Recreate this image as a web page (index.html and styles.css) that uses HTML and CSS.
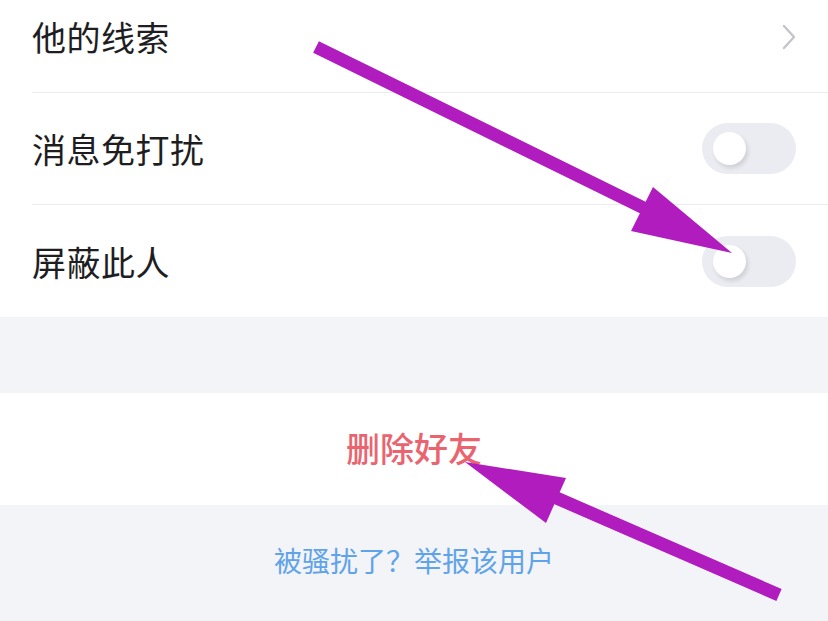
FILE: index.html
```html
<!DOCTYPE html>
<html lang="zh-CN">
<head>
    <meta charset="UTF-8">
    <meta name="viewport" content="width=device-width, initial-scale=1.0">
    <title>好友设置</title>
    <link rel="stylesheet" href="styles.css">
</head>
<body>

    <div class="page">
        <div class="group group-top">
            <div class="row">
                <span class="row-label">他的线索</span>
                <svg class="chevron" width="16" height="26" viewBox="0 0 16 26">
                    <polyline points="3,2 13,13 3,24" fill="none" stroke="#c4c5ca" stroke-width="2.4" stroke-linecap="round" stroke-linejoin="round"/>
                </svg>
            </div>
            <div class="row">
                <span class="row-label">消息免打扰</span>
                <span class="switch"><span class="knob"></span></span>
            </div>
            <div class="row">
                <span class="row-label">屏蔽此人</span>
                <span class="switch"><span class="knob"></span></span>
            </div>
        </div>

        <div class="group group-action">
            <button type="button" class="delete-btn">删除好友</button>
        </div>

        <div class="footer">
            <a href="#" class="report-link">被骚扰了？举报该用户</a>
        </div>

        <!-- annotation arrows drawn over the screenshot -->
        <svg class="arrows" width="828" height="621" viewBox="0 0 828 621">
            <line x1="316" y1="47" x2="660" y2="216" stroke="#b01cbd" stroke-width="13"/>
            <polygon points="732,253 653,187 631,231" fill="#b01cbd"/>
            <line x1="779" y1="595" x2="545" y2="493" stroke="#b01cbd" stroke-width="13"/>
            <polygon points="465,462 566,478 546,523" fill="#b01cbd"/>
        </svg>
    </div>

</body>
</html>
```

FILE: styles.css
```css
:root {
    --bg-gray: #f3f4f7;
    --text-dark: #1e1e22;
    --line: #ececee;
    --switch-off: #ebecf2;
    --danger: #ea6470;
    --link: #5fa3ea;
}
* { margin: 0; padding: 0; box-sizing: border-box; }
body {
    font-family: "Noto Sans CJK SC", "Noto Sans", sans-serif;
    background: var(--bg-gray);
    overflow: hidden;
}
.page {
    position: relative;
    display: flow-root;
    width: 828px;
    height: 621px;
}
.group { background: #fff; }
.group-top { margin-top: -19px; }
.row {
    display: flex;
    align-items: center;
    justify-content: space-between;
    height: 112px;
    margin-left: 32px;
    padding-right: 32px;
    border-bottom: 1px solid var(--line);
}
.row:last-child { border-bottom: none; }
.row-label { font-size: 34px; color: var(--text-dark); letter-spacing: 0.5px; }
.chevron { margin-right: -1px; }

.switch {
    display: flex;
    align-items: center;
    width: 94px;
    height: 51px;
    border-radius: 26px;
    background: var(--switch-off);
    padding-left: 11px;
}
.knob {
    width: 33px;
    height: 33px;
    border-radius: 50%;
    background: #fff;
    box-shadow: 2px 3px 4px rgba(0, 0, 0, 0.12);
}

.group-action {
    margin-top: 76px;
    height: 112px;
    display: flex;
    align-items: center;
    justify-content: center;
}
.delete-btn {
    font-family: inherit;
    font-size: 34px;
    font-weight: 500;
    color: var(--danger);
    background: none;
    border: none;
    cursor: pointer;
    margin-top: -4px;
}

.footer {
    text-align: center;
    padding-top: 35px;
}
.report-link {
    font-size: 28px;
    color: var(--link);
    text-decoration: none;
}

.arrows {
    position: absolute;
    left: 0;
    top: 0;
    pointer-events: none;
}
```
